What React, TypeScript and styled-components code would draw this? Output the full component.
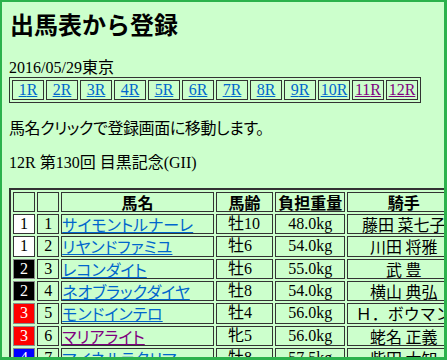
import React from "react";
import styled, { createGlobalStyle } from "styled-components";

const Global = createGlobalStyle`
  html, body { margin: 0; padding: 0; background: #ccffcc; }
  body { font-family: "Liberation Serif", "Noto Sans CJK JP", serif; font-size: 16px; color: #000; }
`;

const GOTHIC = `"Noto Sans CJK JP", "Liberation Sans", sans-serif`;
const SERIF_JP = `"Liberation Serif", "Noto Sans CJK JP", serif`;

const Frame = styled.div`
  width: 447px;
  height: 360px;
  box-sizing: border-box;
  border-style: solid;
  border-color: #2bb24c;
  border-width: 2px 3px 3px 2px;
  background: #ccffcc;
  overflow: hidden;
  padding-left: 7px;
`;

const Title = styled.h1`
  margin: 8px 0 0 1px;
  font-family: ${GOTHIC};
  font-size: 24px;
  line-height: 28px;
  font-weight: 700;
`;

const DateLine = styled.div`
  margin-top: 21px;
  font-family: ${SERIF_JP};
  font-size: 16px;
  line-height: 18px;
`;

const RaceNav = styled.div`
  display: inline-flex;
  gap: 2px;
  padding: 2px;
  border: 1px solid #333;
`;

const NavCell = styled.div`
  box-sizing: border-box;
  width: 32px;
  height: 20px;
  border: 1px solid #333;
  text-align: center;
  font-family: ${SERIF_JP};
  font-size: 16px;
  line-height: 18px;
`;

const Link = styled.a<{ $visited?: boolean }>`
  color: ${(p) => (p.$visited ? "#800080" : "#0066cc")};
  text-decoration: underline;
  cursor: pointer;
`;

const Note = styled.p`
  margin: 14px 0 0;
  font-family: ${GOTHIC};
  font-feature-settings: "palt";
  letter-spacing: -0.4px;
  font-size: 16px;
  line-height: 20px;
`;

const RaceTitle = styled.p`
  margin: 16px 0 0;
  font-family: ${SERIF_JP};
  font-size: 16px;
  line-height: 20px;
`;

const EntryTable = styled.table`
  margin-top: 15px;
  border-collapse: separate;
  border-spacing: 2px;
  border: 2px solid #333;
  table-layout: fixed;
  width: 455px;
`;

const HeadCell = styled.th<{ $w: number }>`
  box-sizing: border-box;
  width: ${(p) => p.$w}px;
  height: 20px;
  padding: 0;
  border: 1px solid #333;
  font-family: ${GOTHIC};
  font-weight: 700;
  font-size: 16px;
  line-height: 18px;
  text-align: center;
  white-space: nowrap;
`;

const Cell = styled.td<{ $align?: "left" | "center"; $font?: "serif" | "gothic"; $pl?: number }>`
  box-sizing: border-box;
  height: 20.33px;
  padding: 0 0 0 ${(p) => p.$pl ?? 0}px;
  border: 1px solid #333;
  font-family: ${(p) => (p.$font === "gothic" ? GOTHIC : SERIF_JP)};
  font-size: 16px;
  line-height: 18px;
  text-align: ${(p) => p.$align ?? "center"};
  white-space: nowrap;
`;

const FRAME_COLORS: Record<number, { bg: string; fg: string; bd: string }> = {
  1: { bg: "#ffffff", fg: "#000000", bd: "#333333" },
  2: { bg: "#000000", fg: "#ffffff", bd: "#8a8a8a" },
  3: { bg: "#ff0000", fg: "#ffffff", bd: "#8a8a8a" },
  4: { bg: "#0000ff", fg: "#ffffff", bd: "#8a8a8a" },
};

const WakuCell = styled(Cell)<{ $waku: number }>`
  background: ${(p) => FRAME_COLORS[p.$waku].bg};
  color: ${(p) => FRAME_COLORS[p.$waku].fg};
  border-color: ${(p) => FRAME_COLORS[p.$waku].bd};
`;

const HorseName = styled(Link)`
  font-feature-settings: "palt";
`;

const races = Array.from({ length: 12 }, (_, i) => i + 1);

const entries = [
  { waku: 1, no: 1, name: "サイモントルナーレ", age: "牡10", weight: "48.0kg", jockey: "藤田 菜七子" },
  { waku: 1, no: 2, name: "リヤンドファミユ", age: "牡6", weight: "54.0kg", jockey: "川田 将雅" },
  { waku: 2, no: 3, name: "レコンダイト", age: "牡6", weight: "55.0kg", jockey: "武 豊" },
  { waku: 2, no: 4, name: "ネオブラックダイヤ", age: "牡8", weight: "54.0kg", jockey: "横山 典弘" },
  { waku: 3, no: 5, name: "モンドインテロ", age: "牡4", weight: "56.0kg", jockey: "Ｈ．ボウマン" },
  { waku: 3, no: 6, name: "マリアライト", age: "牝5", weight: "56.0kg", jockey: "蛯名 正義", visited: true },
  { waku: 4, no: 7, name: "マイネルラクリマ", age: "牡8", weight: "57.5kg", jockey: "柴田 大知" },
];

export default function App() {
  return (
    <>
      <Global />
      <Frame>
        <Title>出馬表から登録</Title>
        <DateLine>2016/05/29東京</DateLine>
        <RaceNav>
          {races.map((r) => (
            <NavCell key={r}>
              <Link $visited={r >= 11}>{r}R</Link>
            </NavCell>
          ))}
        </RaceNav>
        <Note>馬名クリックで登録画面に移動します。</Note>
        <RaceTitle>12R 第130回 目黒記念(GII)</RaceTitle>
        <EntryTable>
          <thead>
            <tr>
              <HeadCell $w={22}></HeadCell>
              <HeadCell $w={22}></HeadCell>
              <HeadCell $w={152}>馬名</HeadCell>
              <HeadCell $w={57}>馬齢</HeadCell>
              <HeadCell $w={70}>負担重量</HeadCell>
              <HeadCell $w={112}>騎手</HeadCell>
            </tr>
          </thead>
          <tbody>
            {entries.map((e) => (
              <tr key={e.no}>
                <WakuCell $waku={e.waku}>{e.waku}</WakuCell>
                <Cell>{e.no}</Cell>
                <Cell $align="left" $font="gothic">
                  <HorseName $visited={e.visited}>{e.name}</HorseName>
                </Cell>
                <Cell $align="left" $pl={11}>{e.age}</Cell>
                <Cell>{e.weight}</Cell>
                <Cell $font="gothic">{e.jockey}</Cell>
              </tr>
            ))}
          </tbody>
        </EntryTable>
      </Frame>
    </>
  );
}
